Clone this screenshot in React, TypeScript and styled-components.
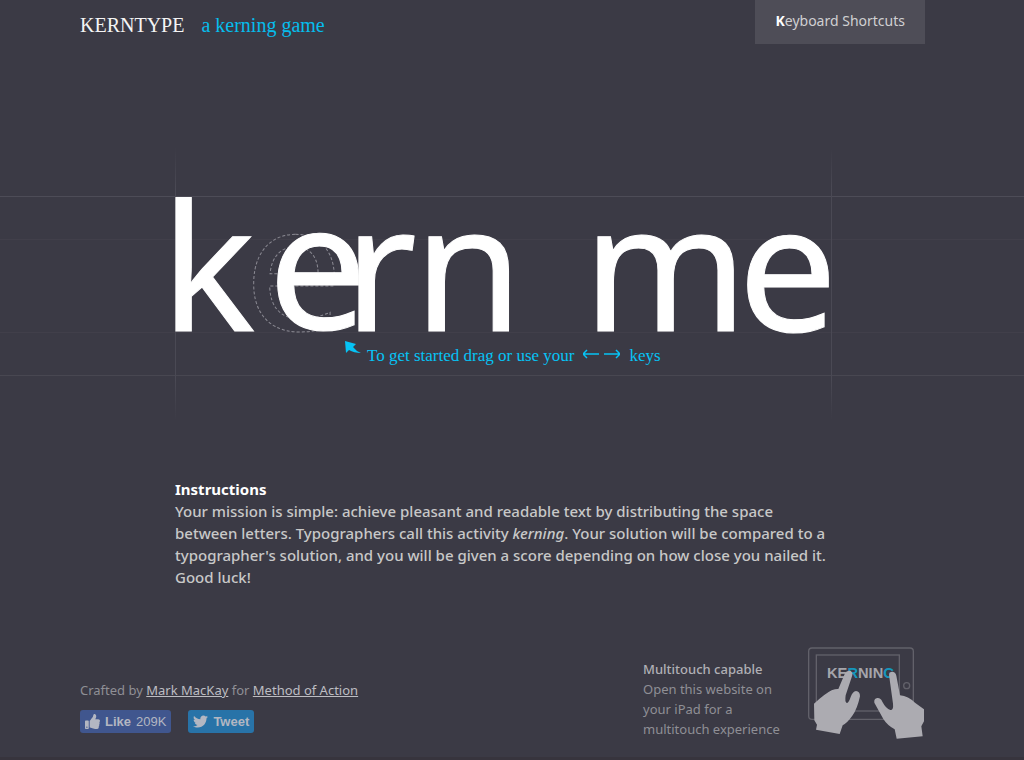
import React from "react";
import styled, { createGlobalStyle } from "styled-components";
import { FaThumbsUp, FaTwitter } from "react-icons/fa";

const sans = `"Noto Sans", "Open Sans", sans-serif`;
const serif = `"Liberation Serif", "Times New Roman", serif`;
const grotesk = `"Liberation Sans", Arial, sans-serif`;

const GlobalStyle = createGlobalStyle`
  *, *::before, *::after { box-sizing: border-box; }
  body { margin: 0; background: #3b3a45; color: #c8c8c8; font-family: ${sans}; }
  h1, h2, p { margin: 0; }
`;

const Page = styled.div`
  min-height: 100vh;
  display: flex;
  flex-direction: column;
  border-bottom: 3px solid #37343d;
`;

const Header = styled.header`
  display: flex;
  justify-content: space-between;
  align-items: flex-start;
  padding: 0 99px 0 80px;
`;

const Brand = styled.div`
  display: flex;
  gap: 17px;
  padding-top: 13px;
  font-family: ${serif};
  font-size: 20px;
  line-height: 24px;
`;

const Title = styled.h1`
  font-size: 20px;
  font-weight: 400;
  color: #f4f4f4;
`;

const Tagline = styled.p`
  color: #06bdec;
`;

const ShortcutsButton = styled.button`
  height: 44px;
  padding: 0 20px 2px;
  border: 0;
  background: #4e4d57;
  color: #d0d0d2;
  font: 400 14px/40px ${sans};
  cursor: pointer;

  &::first-letter { color: #fff; font-weight: 700; }
`;

const Stage = styled.main`
  position: relative;
  height: 272px;
  margin-top: 104px;
`;

const HorizontalGuide = styled.div<{ $y: number; $color: string }>`
  position: absolute;
  top: ${(p) => p.$y}px;
  left: 0;
  right: 0;
  height: 1px;
  background: ${(p) => p.$color};
`;

const VerticalGuide = styled.div<{ $x: number }>`
  position: absolute;
  top: 0;
  bottom: 0;
  left: ${(p) => p.$x}px;
  width: 1px;
  background: linear-gradient(transparent, #4a4954 15%, #4a4954 85%, transparent);
`;

const Word = styled.div`
  position: relative;
  max-width: 656px;
  height: 272px;
  margin-left: 175px;
`;

const Letter = styled.button<{ $x: number; $lift?: number }>`
  position: absolute;
  left: ${(p) => p.$x}px;
  top: ${(p) => 5 - (p.$lift ?? 0)}px;
  padding: 0;
  border: 0;
  background: none;
  color: #fff;
  -webkit-text-stroke: 1px #fff;
  font: 400 176px/220px ${sans};
  cursor: ew-resize;
`;

const Ghost = styled.svg`
  position: absolute;
  left: 69px;
  top: 64px;
  fill: none;
  stroke: #8a8992;
  stroke-dasharray: 3 2;
  overflow: visible;
  font: 400 176px ${sans};
`;

const Hint = styled.p`
  position: absolute;
  left: 170px;
  top: 190px;
  display: flex;
  color: #06c3f5;
  font: 17px/36px ${serif};
  white-space: nowrap;
`;

const HintPointer = styled.svg`
  margin: 3px 6px 0 0;
  fill: #06c3f5;
`;

const HintArrows = styled.svg`
  margin: 11px 9px 0 9px;
  fill: none;
  stroke: #06c3f5;
  stroke-width: 1.5;
`;

const Instructions = styled.section`
  max-width: 656px;
  margin: 58px 0 0 175px;
  font-size: 15px;
  font-weight: 500;
  line-height: 22px;
`;

const InstructionsTitle = styled.h2`
  color: #fff;
  font-size: 15px;
  line-height: 22px;
`;

const Footer = styled.footer`
  display: flex;
  justify-content: space-between;
  padding: 0 99px 0 80px;
  margin-top: 59px;
  font-size: 13px;
  line-height: 20px;
  color: #8f8f95;
`;

const Credits = styled.div`
  padding-top: 33px;
`;

const CreditLink = styled.a`
  color: #bdbdc2;
  font-weight: 400;
`;

const Social = styled.div`
  display: flex;
  gap: 17px;
  margin-top: 10px;
`;

const SocialButton = styled.button<{ $color: string }>`
  display: flex;
  align-items: center;
  gap: 5px;
  height: 23px;
  padding: 0 5px;
  border: 0;
  border-radius: 3px;
  background: ${(p) => p.$color};
  color: #b3b7c2;
  font: 13px ${grotesk};
  cursor: pointer;
`;

const Device = styled.div`
  display: flex;
  gap: 21px;
`;

const DeviceText = styled.div`
  width: 144px;
  padding-top: 12px;
`;

const DeviceTitle = styled.h2`
  font-size: 13px;
  font-weight: 500;
  color: #b0b0b5;
`;

const letters = [
  { char: "k", x: -14 },
  { char: "e", x: 93, lift: 2 },
  { char: "r", x: 169 },
  { char: "n", x: 239 },
  { char: "m", x: 408 },
  { char: "e", x: 563 },
];

function TabletDrawing() {
  return (
    <svg width="117" height="92" viewBox="24 20 351 276" aria-hidden="true">
      <g fill="none" stroke="#62616a" strokeWidth="4">
        <rect x="26" y="23" width="314" height="214" rx="10" />
        <rect x="49" y="44" width="249" height="168" />
        <circle cx="320" cy="136" r="9" />
      </g>
      <text x="81" y="113" fontFamily="Liberation Sans, Arial, sans-serif" fontWeight="700" fontSize="44" fill="#a5a5ab">
        KE<tspan fill="#1597bd">R</tspan>NIN<tspan fill="#1597bd">G</tspan>
      </text>
      <g fill="#acabb1">
        <path d="M135 99 Q141 88 152 92 Q160 97 156 108 L137 165 Q134 185 140 188 Q146 188 152 170 Q158 153 168 152 Q180 153 180 168 Q172 205 158 225 Q142 248 128 255 L119 281 L48 268 L51 253 L43 240 L42 190 Q75 160 95 150 Q108 145 115 146 Z" />
        <path d="M267 103 Q269 93 278 94 Q287 95 289 106 L300 165 Q325 168 345 187 L372 207 L372 243 L364 258 L368 288 L290 295 L284 267 Q262 255 250 236 L223 187 Q221 175 232 173 Q242 172 247 184 Q258 205 271 209 Q281 210 279 190 Z" />
      </g>
    </svg>
  );
}

export default function App() {
  return (
    <>
      <GlobalStyle />
      <Page>
        <Header>
          <Brand>
            <Title>KERNTYPE</Title>
            <Tagline>a kerning game</Tagline>
          </Brand>
          <ShortcutsButton>Keyboard Shortcuts</ShortcutsButton>
        </Header>
        <Stage>
          <HorizontalGuide $y={48} $color="#4d4c57" />
          <HorizontalGuide $y={91} $color="#413f4a" />
          <HorizontalGuide $y={184} $color="#413f4a" />
          <HorizontalGuide $y={227} $color="#484751" />
          <Word>
            <VerticalGuide $x={0} />
            <VerticalGuide $x={656} />
            <Ghost width="100" height="120" aria-hidden="true">
              <text x="0" y="118">e</text>
            </Ghost>
            {letters.map((l, i) => (
              <Letter key={i} $x={l.x} $lift={l.lift}>{l.char}</Letter>
            ))}
            <Hint>
              <HintPointer width="16" height="13" viewBox="0 0 16 13">
                <path d="M0 0 L11 3 L8 6 Q11 10 16 12 Q9 12 4 9 L1 12 Z" />
              </HintPointer>
              To get started drag or use your
              <HintArrows width="37" height="10" viewBox="0 0 37 10">
                <path d="M0 5 H16 M4 1 L0 5 L4 9 M21 5 H37 M33 1 L37 5 L33 9" />
              </HintArrows>
              keys
            </Hint>
          </Word>
        </Stage>
        <Instructions>
          <InstructionsTitle>Instructions</InstructionsTitle>
          <p>
            Your mission is simple: achieve pleasant and readable text by distributing the space between
            letters. Typographers call this activity <em>kerning</em>. Your solution will be compared to a
            typographer's solution, and you will be given a score depending on how close you nailed it.
            Good luck!
          </p>
        </Instructions>
        <Footer>
          <Credits>
            <p>
              Crafted by <CreditLink href="#mackay">Mark MacKay</CreditLink> for{" "}
              <CreditLink href="#method">Method of Action</CreditLink>
            </p>
            <Social>
              <SocialButton $color="#40568e">
                <FaThumbsUp size={15} />
                <strong>Like</strong> 209K
              </SocialButton>
              <SocialButton $color="#2873a8">
                <FaTwitter size={15} />
                <strong>Tweet</strong>
              </SocialButton>
            </Social>
          </Credits>
          <Device>
            <DeviceText>
              <DeviceTitle>Multitouch capable</DeviceTitle>
              <p>Open this website on your iPad for a multitouch experience</p>
            </DeviceText>
            <TabletDrawing />
          </Device>
        </Footer>
      </Page>
    </>
  );
}
